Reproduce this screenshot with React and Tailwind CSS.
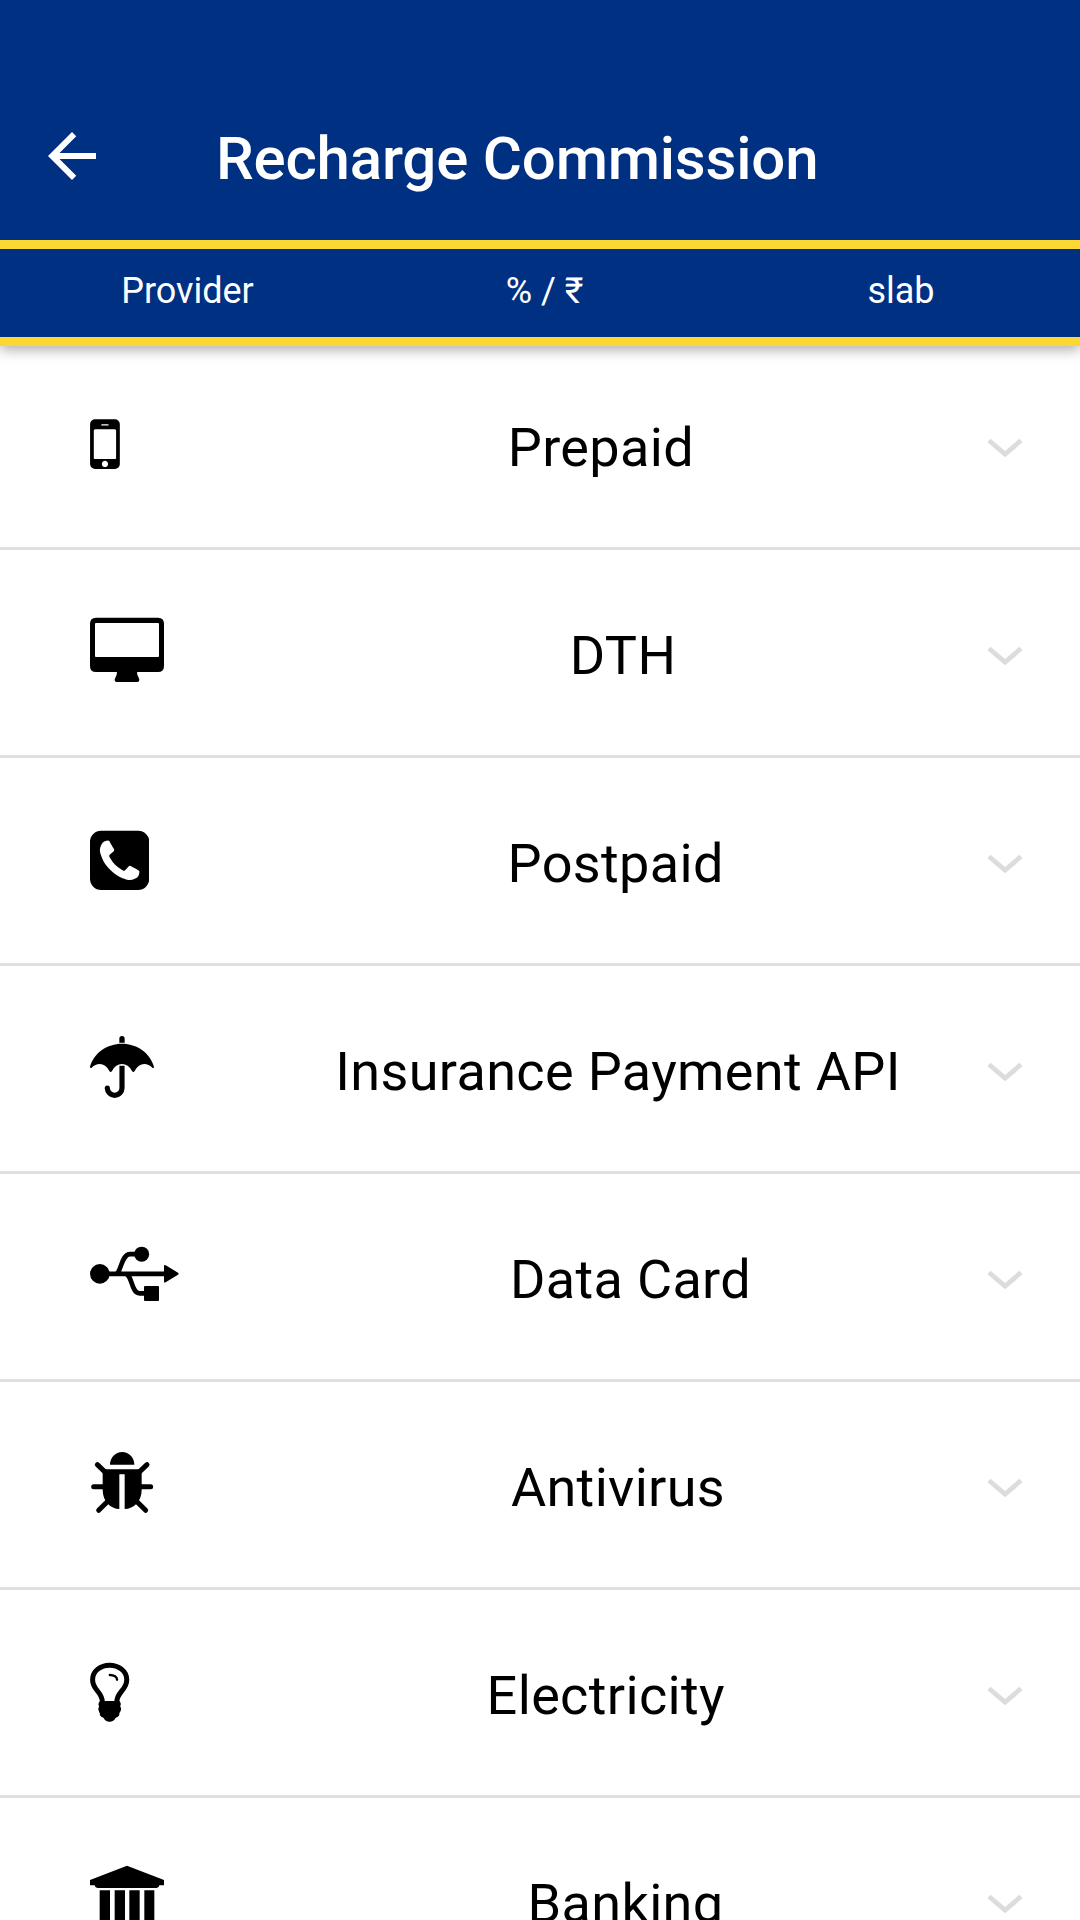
import { MdArrowBack } from "react-icons/md";

// every row icon shares a 216 unit tall box (72px), only the width differs
const MobileIcon = () => (
  <svg viewBox="0 0 89 216" className="w-[29.7px] h-[72px] shrink-0" fill="currentColor">
    <path
      transform="translate(-59.3 10.3) scale(0.1162)"
      d="M976 1408q0-33-23.5-56.5t-56.5-23.5-56.5 23.5-23.5 56.5 23.5 56.5 56.5 23.5 56.5-23.5 23.5-56.5zm208-160v-704q0-13-9.5-22.5t-22.5-9.5h-512q-13 0-22.5 9.5t-9.5 22.5v704q0 13 9.5 22.5t22.5 9.5h512q13 0 22.5-9.5t9.5-22.5zm-192-848q0-16-16-16h-160q-16 0-16 16t16 16h160q16 0 16-16zm288-16v1024q0 52-38 90t-90 38h-512q-52 0-90-38t-38-90v-1024q0-52 38-90t90-38h512q52 0 90 38t38 90z"
    />
  </svg>
);

const DesktopIcon = () => (
  <svg viewBox="0 0 222 216" className="w-[74px] h-[72px] shrink-0" fill="currentColor">
    <path
      fillRule="evenodd"
      d="M18 11h186q18 0 18 18v127q0 18-18 18h-186q-18 0-18-18v-127q0-18 18-18zM18 27q-3 0-3 3v96q0 3 3 3h186q3 0 3-3v-96q0-3-3-3z"
    />
    <path d="M81 173q0 11-5 18-2 4-2 7 0 6 6 6h62q6 0 6-6 0-3-2-7-5-7-5-18z" />
  </svg>
);

const PhoneIcon = () => (
  <svg viewBox="0 0 178 216" className="w-[59.3px] h-[72px] shrink-0" fill="currentColor">
    <path
      transform="translate(-14.8 11.2) scale(0.1158)"
      d="M1408 1193q0-11-2-16-3-8-38.5-29.5t-88.5-49.5l-53-29q-5-3-19-13t-25-15-21-5q-18 0-47 32.5t-57 65.5-44 33q-7 0-16.5-3.5t-15.5-6.5-17-9.5-14-8.5q-99-55-170.5-126.5t-126.5-170.5q-2-3-8.5-14t-9.5-17-6.5-15.5-3.5-16.5q0-13 20.5-33.5t45-38.5 45-39.5 20.5-36.5q0-10-5-21t-15-25-13-19q-3-6-15-28.5t-25-45.5-26.5-47.5-25-40.5-16.5-18-16-2q-48 0-101 22-46 21-80 94.5t-34 130.5q0 16 2.5 34t5 30.5 9 33 10 29.5 12.5 33 11 30q60 164 216.5 320.5t320.5 216.5q6 2 30 11t33 12.5 29.5 10 33 9 30.5 5 34 2.5q57 0 130.5-34t94.5-80q22-53 22-101zm256-777v960q0 119-84.5 203.5t-203.5 84.5h-960q-119 0-203.5-84.5t-84.5-203.5v-960q0-119 84.5-203.5t203.5-84.5h960q119 0 203.5 84.5t84.5 203.5z"
    />
  </svg>
);

const UmbrellaIcon = () => (
  <svg viewBox="0 0 192 216" className="w-[64px] h-[72px] shrink-0" fill="currentColor">
    <path d="M88 38v-12q0-8 8-8t8 8v12z" />
    <path d="M0 110C12 68 52 41 96 41S180 68 192 110q0 6-5 3-11-11-24-11-18 0-29 21-4 6-8 0-11-21-30-21t-30 21q-4 6-8 0-11-21-29-21-13 0-24 11-5 3-5-3z" />
    <path d="M96 107v67a22 22 0 0 1-44 0" fill="none" stroke="currentColor" strokeWidth="15.5" />
    <circle cx="52" cy="174" r="7.7" />
  </svg>
);

const UsbIcon = () => (
  <svg viewBox="0 0 267 216" className="w-[89px] h-[72px] shrink-0" fill="currentColor">
    <circle cx="29.5" cy="107.5" r="29.5" />
    <circle cx="155" cy="48.5" r="22.5" />
    <rect x="162" y="144" width="45" height="45" rx="3" />
    <path d="M222 84q0-5 5-2l37 22q4 3 0 6l-37 23q-5 3-5-3z" />
    <path
      d="M30 107.5h195M76 107.5C94 107.5 93 48.5 120 48.5h30M105 107.5C128 107.5 122 166 149 166h20"
      fill="none"
      stroke="currentColor"
      strokeWidth="14"
    />
  </svg>
);

const BugIcon = () => (
  <svg viewBox="0 0 192 216" className="w-[64px] h-[72px] shrink-0" fill="currentColor">
    <path d="M60 56C60 35 76 18 96.500 18S133 35 133 56z" />
    <path d="M38 70h117v61c0 36-24 57-51 58V85H88v104c-26-1-50-22-50-58z" />
    <path
      d="M22 56L47 80M171 56L146 80M11 122H40M182 122H153M26 193L52 167M167 193L141 167"
      fill="none"
      stroke="currentColor"
      strokeWidth="15"
      strokeLinecap="round"
    />
  </svg>
);

const BulbIcon = () => (
  <svg viewBox="0 0 118 216" className="w-[39.5px] h-[72px] shrink-0" fill="currentColor">
    <path
      d="M37 145C37 112 7.500 110 7.500 77 7.500 51 32 33.500 58.500 33.500S110 51 110 77C110 110 80 112 80 145"
      fill="none"
      stroke="currentColor"
      strokeWidth="15"
    />
    <path d="M59 63c13 0 22 6 22 14" fill="none" stroke="currentColor" strokeWidth="7" strokeLinecap="round" />
    <path d="M30 141h58q7 8 2 16 6 8 0 17-1 1-2 3 1 11-11 14-6 12-18.500 12T40 191q-12-3-11-14-1-2-2-3-5-9 0-17-5-8 3-16z" />
  </svg>
);

const BankIcon = () => (
  <svg viewBox="0 0 237 216" className="w-[79px] h-[72px] shrink-0" fill="currentColor">
    <path d="M111 11l111 43v16h-14q-1 8-8 8H22q-7 0-8-8H0V54z" />
    <path d="M29 85h31v89h14V85h31v89h13V85h31v89h14V85h30v89h7q8 0 8 8v7H15v-7q0-8 8-8h6zM7 196h208q7 0 7 7v8H0v-8q0-7 7-7z" />
  </svg>
);

const ChevronIcon = () => (
  <svg viewBox="0 0 36 20" className="w-9 h-5" fill="none" stroke="#dcdcdc" strokeWidth="4.8">
    <path d="M2 2.500L18 16 34 2.500" />
  </svg>
);

const categories = [
  { name: "Prepaid", Icon: MobileIcon },
  { name: "DTH", Icon: DesktopIcon },
  { name: "Postpaid", Icon: PhoneIcon },
  { name: "Insurance Payment API", Icon: UmbrellaIcon },
  { name: "Data Card", Icon: UsbIcon },
  { name: "Antivirus", Icon: BugIcon },
  { name: "Electricity", Icon: BulbIcon },
  { name: "Banking", Icon: BankIcon },
];

const Header = () => (
  <header className="relative z-10 bg-[#003082] text-white shadow-[0_4px_12px_rgba(0,0,0,0.32)]">
    <div className="flex h-[240px] items-center pt-[72px] pl-9">
      <MdArrowBack className="size-[72px] shrink-0" />
      <h1 className="ml-[108px] pt-1.5 text-[60px] leading-[70px] font-medium tracking-[-0.2px] whitespace-nowrap">
        Recharge Commission
      </h1>
    </div>

    <div className="flex h-[106px] items-center border-y-[9px] border-[#fdd835] pb-1 text-center text-[36px] leading-[42px]">
      <span className="w-[375px]">Provider</span>
      <span className="w-[339px]">% / ₹</span>
      <span className="flex-1 pl-2">slab</span>
    </div>
  </header>
);

const CategoryRow = ({ name, Icon }) => (
  <li className="flex h-[208px] items-start border-b-[3px] border-[#e0e0e0] pt-[64px] pl-[90px]">
    <Icon />
    <span className="flex-1 pt-2.5 pl-[114px] text-center text-[54px] leading-[63px] tracking-[0.35px] whitespace-nowrap">
      {name}
    </span>
    <div className="w-[112px] shrink-0 pt-[32px] pl-[19px]">
      <ChevronIcon />
    </div>
  </li>
);

export default function App() {
  return (
    <div className="h-[1920px] w-[1080px] overflow-hidden bg-white font-['Roboto',sans-serif] text-black">
      <Header />
      <ul className="-mt-1">
        {categories.map(({ name, Icon }) => (
          <CategoryRow key={name} name={name} Icon={Icon} />
        ))}
      </ul>
    </div>
  );
}
